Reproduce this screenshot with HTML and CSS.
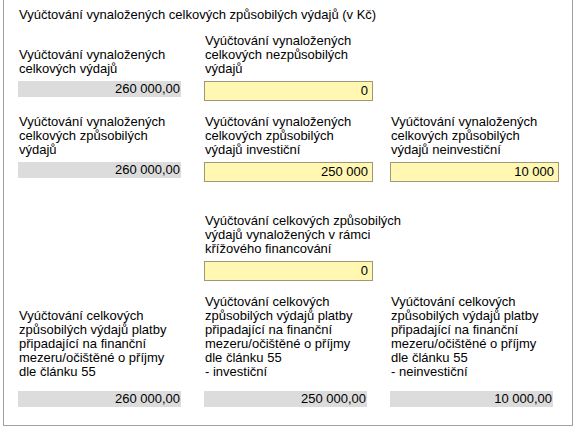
FILE: index.html
```html
<!DOCTYPE html>
<html lang="cs">
<head>
<meta charset="utf-8">
<title>Vyúčtování</title>
<link rel="stylesheet" href="styles.css">
</head>
<body>
<div class="frame">
  <div class="title">Vyúčtování vynaložených celkových způsobilých výdajů (v Kč)</div>

  <div class="grid row1">
    <div class="label">Vyúčtování vynaložených<br>celkových výdajů</div>
    <div class="label">Vyúčtování vynaložených<br>celkových nezpůsobilých<br>výdajů</div>
    <div class="label"></div>
    <div class="ro">260 000,00</div>
    <div class="inp">0</div>
    <div></div>
  </div>

  <div class="grid row2">
    <div class="label">Vyúčtování vynaložených<br>celkových způsobilých<br>výdajů</div>
    <div class="label">Vyúčtování vynaložených<br>celkových způsobilých<br>výdajů investiční</div>
    <div class="label">Vyúčtování vynaložených<br>celkových způsobilých<br>výdajů neinvestiční</div>
    <div class="ro">260 000,00</div>
    <div class="inp">250 000</div>
    <div class="inp">10 000</div>
  </div>

  <div class="grid row3">
    <div class="label"></div>
    <div class="label">Vyúčtování celkových způsobilých<br>výdajů vynaložených v rámci<br>křížového financování</div>
    <div class="label"></div>
    <div></div>
    <div class="inp">0</div>
    <div></div>
  </div>

  <div class="grid row4">
    <div class="label">Vyúčtování celkových<br>způsobilých výdajů platby<br>připadající na finanční<br>mezeru/očištěné o příjmy<br>dle článku 55</div>
    <div class="label">Vyúčtování celkových<br>způsobilých výdajů platby<br>připadající na finanční<br>mezeru/očištěné o příjmy<br>dle článku 55<br>- investiční</div>
    <div class="label">Vyúčtování celkových<br>způsobilých výdajů platby<br>připadající na finanční<br>mezeru/očištěné o příjmy<br>dle článku 55<br>- neinvestiční</div>
    <div class="ro">260 000,00</div>
    <div class="ro">250 000,00</div>
    <div class="ro">10 000,00</div>
  </div>
</div>
</body>
</html>
```

FILE: styles.css
```css
html, body {
  margin: 0;
  padding: 0;
  background: #ffffff;
}

body {
  font-family: "Liberation Sans", Arial, sans-serif;
  font-size: 13px;
  line-height: 14px;
  color: #000000;
}

.frame {
  box-sizing: border-box;
  margin-left: 3px;
  width: 570px;
  height: 426px;
  border: 1px solid #a0a0a0;
  border-top: none;
  padding: 8px 0 0 14px;
}

.title {
  padding-left: 1px;
  white-space: nowrap;
}

.grid {
  display: grid;
  grid-template-columns: 186px 186px 186px;
  row-gap: 5px;
  align-items: end;
}

.row1 { margin-top: 12px; }
.row2 { margin-top: 14px; }
.row3 { margin-top: 32px; }
.row4 { margin-top: 14px; row-gap: 12px; }

.label {
  padding-left: 1px;
  white-space: nowrap;
}

.ro,
.inp {
  align-self: start;
  box-sizing: border-box;
  text-align: right;
  white-space: nowrap;
}

.ro {
  width: 163px;
  height: 16px;
  line-height: 16px;
  background: #dcdcdc;
  padding-right: 1px;
}

.inp {
  width: 169px;
  height: 20px;
  line-height: 18px;
  background: #fff7b2;
  border: 1px solid #9e9878;
  padding-right: 4px;
}
```
